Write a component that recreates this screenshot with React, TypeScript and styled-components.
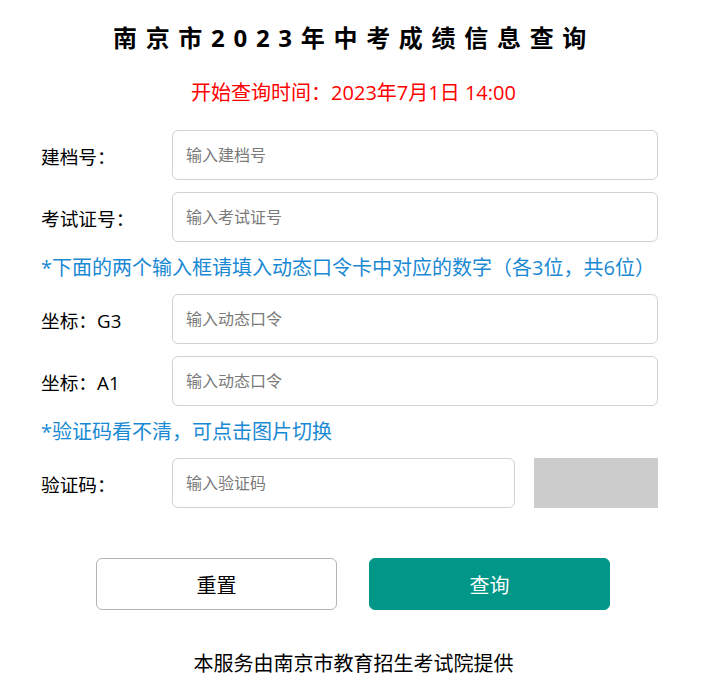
import React, { useState } from 'react'
import styled, { createGlobalStyle } from 'styled-components'

const GlobalStyle = createGlobalStyle`
  body {
    margin: 0;
    background: #fff;
    font-family: "Open Sans", "Noto Sans CJK SC", sans-serif;
    color: #000;
  }
`

const Page = styled.div`
  width: 700px;
  padding: 20px 42px 16px 41px;
  box-sizing: border-box;
`

const Title = styled.h1`
  margin: 0;
  font-size: 24px;
  line-height: 36px;
  font-weight: bold;
  letter-spacing: 8.7px;
  text-align: center;
  padding-left: 9px;
`

const StartTime = styled.p`
  margin: 22px 0 22px;
  padding-left: 8px;
  font-size: 20px;
  line-height: 30px;
  color: #ff0000;
  text-align: center;
`

const Form = styled.form`
  display: flex;
  flex-direction: column;
  gap: 12px;
`

const Row = styled.div`
  display: flex;
  align-items: center;
  height: 50px;
`

const Label = styled.label`
  width: 131px;
  flex: none;
  font-size: 18.7px;
  color: #000;
`

const Input = styled.input<{ $grow?: boolean }>`
  box-sizing: border-box;
  height: 50px;
  width: ${(p) => (p.$grow ? 'auto' : '343px')};
  flex: ${(p) => (p.$grow ? '1' : 'none')};
  border: 1px solid #d2d2d2;
  border-radius: 6px;
  padding: 0 13px;
  font-size: 16px;
  font-family: inherit;
  color: #333;
  outline: none;

  &::placeholder {
    color: #7a7a7a;
  }
`

const Captcha = styled.div`
  width: 124px;
  height: 50px;
  margin-left: auto;
  background: #cccccc;
  cursor: pointer;
`

const Note = styled.p`
  margin: 0;
  font-size: 20px;
  line-height: 28px;
  color: #1a89d3;
`

const Buttons = styled.div`
  display: flex;
  gap: 32px;
  margin: 50px 0 0 55px;
`

const Button = styled.button<{ $primary?: boolean }>`
  width: 241px;
  height: 52px;
  box-sizing: border-box;
  border-radius: 6px;
  font-size: 20px;
  font-family: inherit;
  cursor: pointer;
  border: 1px solid ${(p) => (p.$primary ? '#009688' : '#b4b4b4')};
  background: ${(p) => (p.$primary ? '#009688' : '#fff')};
  color: ${(p) => (p.$primary ? '#fff' : '#000')};
`

const Footer = styled.p`
  margin: 40px 0 0;
  font-size: 20px;
  line-height: 28px;
  text-align: center;
  padding-left: 8px;
`

const empty = { dah: '', zkz: '', g3: '', a1: '', yzm: '' }

export default function App() {
  const [values, setValues] = useState(empty)
  const set = (key: keyof typeof values) => (e: React.ChangeEvent<HTMLInputElement>) =>
    setValues({ ...values, [key]: e.target.value })

  return (
    <>
      <GlobalStyle />
      <Page>
        <Title>南京市2023年中考成绩信息查询</Title>
        <StartTime>开始查询时间：2023年7月1日 14:00</StartTime>
        <Form onSubmit={(e) => e.preventDefault()}>
          <Row>
            <Label>建档号：</Label>
            <Input $grow placeholder="输入建档号" value={values.dah} onChange={set('dah')} />
          </Row>
          <Row>
            <Label>考试证号：</Label>
            <Input $grow placeholder="输入考试证号" value={values.zkz} onChange={set('zkz')} />
          </Row>
          <Note>*下面的两个输入框请填入动态口令卡中对应的数字（各3位，共6位）</Note>
          <Row>
            <Label>坐标：G3</Label>
            <Input $grow placeholder="输入动态口令" value={values.g3} onChange={set('g3')} />
          </Row>
          <Row>
            <Label>坐标：A1</Label>
            <Input $grow placeholder="输入动态口令" value={values.a1} onChange={set('a1')} />
          </Row>
          <Note>*验证码看不清，可点击图片切换</Note>
          <Row>
            <Label>验证码：</Label>
            <Input placeholder="输入验证码" value={values.yzm} onChange={set('yzm')} />
            <Captcha />
          </Row>
        </Form>
        <Buttons>
          <Button type="button" onClick={() => setValues(empty)}>
            重置
          </Button>
          <Button type="button" $primary>
            查询
          </Button>
        </Buttons>
        <Footer>本服务由南京市教育招生考试院提供</Footer>
      </Page>
    </>
  )
}
